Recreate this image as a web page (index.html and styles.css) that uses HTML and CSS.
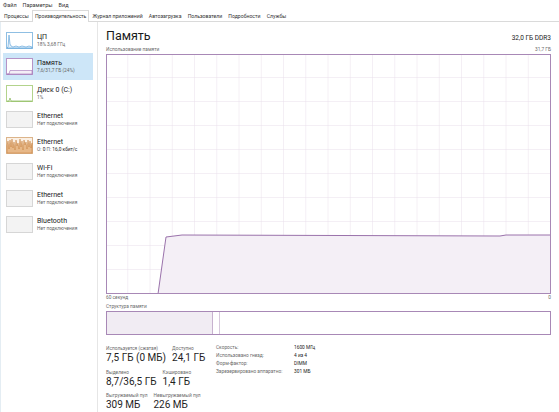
FILE: index.html
```html
<!DOCTYPE html>
<html lang="ru">
<head>
<meta charset="utf-8">
<title>Диспетчер задач</title>
<link rel="stylesheet" href="styles.css">
</head>
<body>
<div class="app">
  <div class="menubar"><span>Файл</span><span>Параметры</span><span>Вид</span></div>
  <div class="tabs">
    <span class="tab">Процессы</span>
    <span class="tab active">Производительность</span>
    <span class="tab">Журнал приложений</span>
    <span class="tab">Автозагрузка</span>
    <span class="tab">Пользователи</span>
    <span class="tab">Подробности</span>
    <span class="tab">Службы</span>
  </div>
  <div class="main">
    <aside class="sidebar">
      <div class="item">
        <svg class="thumb" viewBox="0 0 27 17"><rect x="0.5" y="0.5" width="26" height="16" fill="#fff" stroke="#8fbfe3"/><polygon points="1,16 2,15 3,3 4,12 5,14 7,15 10,14 13,15 16,14 20,15 23,14 26,15 26,16" fill="#e3f0fa" stroke="#4f9bd6" stroke-width="0.6"/></svg>
        <div class="txt"><div class="name">ЦП</div><div class="sub">18% 3,68 ГГц</div></div>
      </div>
      <div class="item sel">
        <svg class="thumb" viewBox="0 0 27 17"><rect x="0.5" y="0.5" width="26" height="16" fill="#fff" stroke="#b593c6"/><polygon points="1,16 3,16 4,12.5 26,12.5 26,16" fill="#f4eef6" stroke="#a06fb5" stroke-width="0.6"/></svg>
        <div class="txt"><div class="name">Память</div><div class="sub">7,6/31,7 ГБ (24%)</div></div>
      </div>
      <div class="item">
        <svg class="thumb" viewBox="0 0 27 17"><rect x="0.5" y="0.5" width="26" height="16" fill="#fff" stroke="#b3d38c"/><polyline points="1,16 3,16 4,13 5,16 26,16" fill="none" stroke="#6ea83a" stroke-width="0.6"/></svg>
        <div class="txt"><div class="name">Диск 0 (C:)</div><div class="sub">1%</div></div>
      </div>
      <div class="item">
        <svg class="thumb" viewBox="0 0 27 17"><rect x="0.5" y="0.5" width="26" height="16" fill="#f3f3f3" stroke="#d6d6d6"/></svg>
        <div class="txt"><div class="name">Ethernet</div><div class="sub">Нет подключения</div></div>
      </div>
      <div class="item">
        <svg class="thumb" viewBox="0 0 27 17"><rect x="0.5" y="0.5" width="26" height="16" fill="#fbf0e4" stroke="#dcb48a"/><polygon points="1,16 1,9 2,4 3,12 4,3 5,10 6,2 7,11 8,5 9,13 10,3 11,9 12,6 13,12 14,2 15,10 16,4 17,13 18,3 19,8 20,5 21,12 22,3 23,10 24,4 25,11 26,6 26,16" fill="#e7b888" stroke="#c47a35" stroke-width="0.5"/></svg>
        <div class="txt"><div class="name">Ethernet</div><div class="sub">О: <b>0</b> П: <b>16,0 кбит/с</b></div></div>
      </div>
      <div class="item">
        <svg class="thumb" viewBox="0 0 27 17"><rect x="0.5" y="0.5" width="26" height="16" fill="#f3f3f3" stroke="#d6d6d6"/></svg>
        <div class="txt"><div class="name">Wi-Fi</div><div class="sub">Нет подключения</div></div>
      </div>
      <div class="item">
        <svg class="thumb" viewBox="0 0 27 17"><rect x="0.5" y="0.5" width="26" height="16" fill="#f3f3f3" stroke="#d6d6d6"/></svg>
        <div class="txt"><div class="name">Ethernet</div><div class="sub">Нет подключения</div></div>
      </div>
      <div class="item">
        <svg class="thumb" viewBox="0 0 27 17"><rect x="0.5" y="0.5" width="26" height="16" fill="#f3f3f3" stroke="#d6d6d6"/></svg>
        <div class="txt"><div class="name">Bluetooth</div><div class="sub">Нет подключения</div></div>
      </div>
    </aside>
    <section class="detail">
      <div class="head"><h1 class="title">Память</h1><span class="model">32,0 ГБ DDR3</span></div>
      <div class="cap"><span>Использование памяти</span><span>31,7 ГБ</span></div>
      <svg class="graph" width="445" height="240" viewBox="0 0 445 240">
        <defs>
          <pattern id="grid" width="22.25" height="24" patternUnits="userSpaceOnUse">
            <path d="M22.25 0V24M0 24H22.25" fill="none" stroke="#e9e0ec" stroke-width="1"/>
          </pattern>
        </defs>
        <rect x="0" y="0" width="445" height="240" fill="url(#grid)"/>
        <polygon points="0,240 52,240 60,183 76,181 394,182 400,181 445,181 445,240" fill="#f4eff6" stroke="#9a72ab" stroke-width="1"/>
        <rect x="0.5" y="0.5" width="444" height="239" fill="none" stroke="#a888b6"/>
      </svg>
      <div class="axis"><span>60 секунд</span><span>0</span></div>
      <div class="struct-label">Структура памяти</div>
      <div class="compbar"><div class="seg inuse"></div><div class="seg mod"></div><div class="seg rest"></div></div>
      <div class="stats">
        <div class="stats-left">
          <div class="row">
            <div class="stat"><div class="lab">Используется (сжатая)</div><div class="val">7,5 ГБ (0 МБ)</div></div>
            <div class="stat"><div class="lab">Доступно</div><div class="val">24,1 ГБ</div></div>
          </div>
          <div class="row">
            <div class="stat"><div class="lab">Выделено</div><div class="val">8,7/36,5 ГБ</div></div>
            <div class="stat"><div class="lab">Кэшировано</div><div class="val">1,4 ГБ</div></div>
          </div>
          <div class="row">
            <div class="stat"><div class="lab">Выгружаемый пул</div><div class="val">309 МБ</div></div>
            <div class="stat"><div class="lab">Невыгружаемый пул</div><div class="val">226 МБ</div></div>
          </div>
        </div>
        <dl class="stats-right">
          <dt>Скорость:</dt><dd>1600 МГц</dd>
          <dt>Использовано гнезд:</dt><dd>4 из 4</dd>
          <dt>Форм-фактор:</dt><dd>DIMM</dd>
          <dt>Зарезервировано аппаратно:</dt><dd>301 МБ</dd>
        </dl>
      </div>
    </section>
  </div>
</div>
</body>
</html>
```

FILE: styles.css
```css
* { box-sizing: border-box; margin: 0; padding: 0; }
html, body { background: #fff; }
body {
  width: 559px;
  height: 412px;
  overflow: hidden;
  font-family: Roboto, "Noto Sans", sans-serif;
  color: #1e1e1e;
}
.app { width: 559px; height: 412px; display: flex; flex-direction: column; }

.menubar {
  height: 10px;
  display: flex;
  gap: 6px;
  padding-left: 3px;
  font-size: 5.5px;
  line-height: 10px;
  color: #333;
}

.tabs {
  height: 12px;
  display: flex;
  align-items: flex-end;
  padding-left: 1px;
  border-bottom: 1px solid #dadada;
  font-size: 5.15px;
  color: #333;
}
.tab {
  height: 11px;
  line-height: 10px;
  padding: 0 2.1px;
  border: 1px solid transparent;
  border-bottom: none;
}
.tab.active {
  background: #fff;
  border-color: #dadada;
  height: 12px;
  margin-bottom: -1px;
}

.main { flex: 1; display: flex; min-height: 0; }

.sidebar {
  width: 98px;
  flex: none;
  border-left: 1px solid #e4edf3;
  border-right: 1px solid #e6e6e6;
  padding-top: 5px;
}
.item {
  display: flex;
  gap: 4px;
  height: 26.3px;
  width: 90px;
  margin-left: 2px;
  padding: 5px 0 0 3px;
}
.item.sel { background: #cde6f8; }
.thumb { width: 27px; height: 17px; flex: none; display: block; }
.txt { padding-top: 1px; }
.name { font-size: 7px; line-height: 8px; color: #222; }
.sub { font-size: 4.8px; line-height: 7px; color: #666; white-space: nowrap; }
.sub b { font-weight: 400; color: #222; }

.detail { flex: 1; padding: 4px 8px 0 8px; display: flex; flex-direction: column; }
.head {
  height: 20px;
  flex: none;
  display: flex;
  justify-content: space-between;
  align-items: baseline;
}
.title { font-size: 12.5px; line-height: 20px; font-weight: 400; color: #1a1a1a; }
.model { font-size: 6.5px; color: #222; }
.cap {
  height: 8px;
  flex: none;
  display: flex;
  justify-content: space-between;
  font-size: 4.8px;
  line-height: 7px;
  color: #6a6a6a;
}
.graph { display: block; width: 445px; height: 240px; flex: none; }
.axis {
  height: 10px;
  flex: none;
  display: flex;
  justify-content: space-between;
  font-size: 4.8px;
  line-height: 8px;
  color: #6a6a6a;
}
.struct-label { height: 7px; flex: none; font-size: 4.8px; line-height: 6px; color: #6a6a6a; }
.compbar {
  height: 24px;
  border: 1px solid #a888b6;
  display: flex;
  flex: none;
}
.seg { height: 100%; }
.inuse { width: 106px; background: #f1ecf3; border-right: 1px solid #c7b2cf; }
.mod { width: 7px; border-right: 1px solid #d7c9dc; }
.rest { flex: 1; }

.stats { display: flex; margin-top: 11px; }
.stats-left { width: 110px; flex: none; }
.row { display: flex; gap: 6px; height: 23.5px; }
.lab { font-size: 4.8px; line-height: 6px; color: #6a6a6a; white-space: nowrap; }
.val { font-size: 10px; line-height: 12px; color: #1e1e1e; white-space: nowrap; }
.stats-right {
  display: grid;
  grid-template-columns: 78px auto;
  grid-auto-rows: 8px;
  font-size: 4.8px;
  line-height: 8px;
  margin-top: -2px;
}
.stats-right dt { color: #6a6a6a; }
.stats-right dd { color: #222; }
```
